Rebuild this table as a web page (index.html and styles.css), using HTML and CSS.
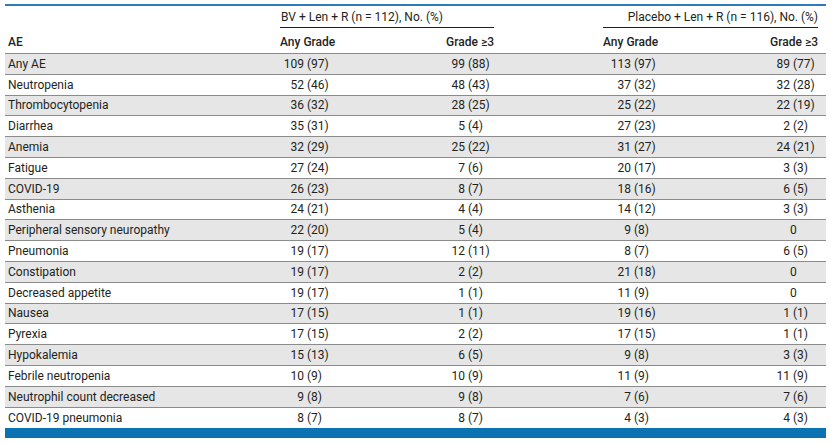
FILE: index.html
```html
<!DOCTYPE html>
<html lang="en">
<head>
<meta charset="utf-8">
<title>Adverse events</title>
<link rel="stylesheet" href="styles.css">
</head>
<body>
<table class="tbl">
  <colgroup>
    <col class="w-ae"><col class="w-c2"><col class="w-c3"><col class="w-gap"><col class="w-c4"><col class="w-c5">
  </colgroup>
  <thead>
    <tr class="h1">
      <th class="ae" rowspan="2">AE</th>
      <th colspan="2" class="grp grp-l"><div class="grp-in">BV + Len + R (n = 112), No. (%)</div></th>
      <th class="gap"></th>
      <th colspan="2" class="grp grp-r"><div class="grp-in">Placebo + Len + R (n = 116), No. (%)</div></th>
    </tr>
    <tr class="h2">
      <th class="sub sub-l">Any Grade</th>
      <th class="sub sub-r">Grade ≥3</th>
      <th class="gap"></th>
      <th class="sub sub-l">Any Grade</th>
      <th class="sub sub-r">Grade ≥3</th>
    </tr>
  </thead>
  <tbody>
    <tr><td class="name">Any AE</td><td class="c2"><span class="n">109</span><span class="p">(97)</span></td><td class="c3"><span class="n">99</span><span class="p">(88)</span></td><td></td><td class="c4"><span class="n">113</span><span class="p">(97)</span></td><td class="c5"><span class="n">89</span><span class="p">(77)</span></td></tr>
    <tr><td class="name">Neutropenia</td><td class="c2"><span class="n">52</span><span class="p">(46)</span></td><td class="c3"><span class="n">48</span><span class="p">(43)</span></td><td></td><td class="c4"><span class="n">37</span><span class="p">(32)</span></td><td class="c5"><span class="n">32</span><span class="p">(28)</span></td></tr>
    <tr><td class="name">Thrombocytopenia</td><td class="c2"><span class="n">36</span><span class="p">(32)</span></td><td class="c3"><span class="n">28</span><span class="p">(25)</span></td><td></td><td class="c4"><span class="n">25</span><span class="p">(22)</span></td><td class="c5"><span class="n">22</span><span class="p">(19)</span></td></tr>
    <tr><td class="name">Diarrhea</td><td class="c2"><span class="n">35</span><span class="p">(31)</span></td><td class="c3"><span class="n">5</span><span class="p">(4)</span></td><td></td><td class="c4"><span class="n">27</span><span class="p">(23)</span></td><td class="c5"><span class="n">2</span><span class="p">(2)</span></td></tr>
    <tr><td class="name">Anemia</td><td class="c2"><span class="n">32</span><span class="p">(29)</span></td><td class="c3"><span class="n">25</span><span class="p">(22)</span></td><td></td><td class="c4"><span class="n">31</span><span class="p">(27)</span></td><td class="c5"><span class="n">24</span><span class="p">(21)</span></td></tr>
    <tr><td class="name">Fatigue</td><td class="c2"><span class="n">27</span><span class="p">(24)</span></td><td class="c3"><span class="n">7</span><span class="p">(6)</span></td><td></td><td class="c4"><span class="n">20</span><span class="p">(17)</span></td><td class="c5"><span class="n">3</span><span class="p">(3)</span></td></tr>
    <tr><td class="name">COVID-19</td><td class="c2"><span class="n">26</span><span class="p">(23)</span></td><td class="c3"><span class="n">8</span><span class="p">(7)</span></td><td></td><td class="c4"><span class="n">18</span><span class="p">(16)</span></td><td class="c5"><span class="n">6</span><span class="p">(5)</span></td></tr>
    <tr><td class="name">Asthenia</td><td class="c2"><span class="n">24</span><span class="p">(21)</span></td><td class="c3"><span class="n">4</span><span class="p">(4)</span></td><td></td><td class="c4"><span class="n">14</span><span class="p">(12)</span></td><td class="c5"><span class="n">3</span><span class="p">(3)</span></td></tr>
    <tr><td class="name">Peripheral sensory neuropathy</td><td class="c2"><span class="n">22</span><span class="p">(20)</span></td><td class="c3"><span class="n">5</span><span class="p">(4)</span></td><td></td><td class="c4"><span class="n">9</span><span class="p">(8)</span></td><td class="c5"><span class="n"></span><span class="p z">0</span></td></tr>
    <tr><td class="name">Pneumonia</td><td class="c2"><span class="n">19</span><span class="p">(17)</span></td><td class="c3"><span class="n">12</span><span class="p">(11)</span></td><td></td><td class="c4"><span class="n">8</span><span class="p">(7)</span></td><td class="c5"><span class="n">6</span><span class="p">(5)</span></td></tr>
    <tr><td class="name">Constipation</td><td class="c2"><span class="n">19</span><span class="p">(17)</span></td><td class="c3"><span class="n">2</span><span class="p">(2)</span></td><td></td><td class="c4"><span class="n">21</span><span class="p">(18)</span></td><td class="c5"><span class="n"></span><span class="p z">0</span></td></tr>
    <tr><td class="name">Decreased appetite</td><td class="c2"><span class="n">19</span><span class="p">(17)</span></td><td class="c3"><span class="n">1</span><span class="p">(1)</span></td><td></td><td class="c4"><span class="n">11</span><span class="p">(9)</span></td><td class="c5"><span class="n"></span><span class="p z">0</span></td></tr>
    <tr><td class="name">Nausea</td><td class="c2"><span class="n">17</span><span class="p">(15)</span></td><td class="c3"><span class="n">1</span><span class="p">(1)</span></td><td></td><td class="c4"><span class="n">19</span><span class="p">(16)</span></td><td class="c5"><span class="n">1</span><span class="p">(1)</span></td></tr>
    <tr><td class="name">Pyrexia</td><td class="c2"><span class="n">17</span><span class="p">(15)</span></td><td class="c3"><span class="n">2</span><span class="p">(2)</span></td><td></td><td class="c4"><span class="n">17</span><span class="p">(15)</span></td><td class="c5"><span class="n">1</span><span class="p">(1)</span></td></tr>
    <tr><td class="name">Hypokalemia</td><td class="c2"><span class="n">15</span><span class="p">(13)</span></td><td class="c3"><span class="n">6</span><span class="p">(5)</span></td><td></td><td class="c4"><span class="n">9</span><span class="p">(8)</span></td><td class="c5"><span class="n">3</span><span class="p">(3)</span></td></tr>
    <tr><td class="name">Febrile neutropenia</td><td class="c2"><span class="n">10</span><span class="p">(9)</span></td><td class="c3"><span class="n">10</span><span class="p">(9)</span></td><td></td><td class="c4"><span class="n">11</span><span class="p">(9)</span></td><td class="c5"><span class="n">11</span><span class="p">(9)</span></td></tr>
    <tr><td class="name">Neutrophil count decreased</td><td class="c2"><span class="n">9</span><span class="p">(8)</span></td><td class="c3"><span class="n">9</span><span class="p">(8)</span></td><td></td><td class="c4"><span class="n">7</span><span class="p">(6)</span></td><td class="c5"><span class="n">7</span><span class="p">(6)</span></td></tr>
    <tr><td class="name">COVID-19 pneumonia</td><td class="c2"><span class="n">8</span><span class="p">(7)</span></td><td class="c3"><span class="n">8</span><span class="p">(7)</span></td><td></td><td class="c4"><span class="n">4</span><span class="p">(3)</span></td><td class="c5"><span class="n">4</span><span class="p">(3)</span></td></tr>
  </tbody>
</table>
</body>
</html>
```
FILE: styles.css
```css
html, body {
  background: #ffffff;
}
body {
  margin: 4px 0 0 5px;
  font-family: Roboto, "Liberation Sans", Arial, sans-serif;
  font-size: 12px;
  color: #231f20;
}
.tbl {
  width: 821px;
  table-layout: fixed;
  border-collapse: separate;
  border-spacing: 0;
  border-top: 2px solid #2a7cbd;
  border-bottom: 10px solid #0b73b2;
}
.w-ae { width: 267px; }
.w-c2 { width: 116px; }
.w-c3 { width: 114px; }
.w-gap { width: 93px; }
.w-c4 { width: 116px; }
.w-c5 { width: 115px; }

th, td {
  padding: 0;
  white-space: nowrap;
}
.h1 { height: 22px; }
.h2 { height: 26px; }
.h2 th, .ae {
  border-bottom: 1px solid #8b8b8b;
}
.ae {
  text-align: left;
  vertical-align: bottom;
  font-weight: 500;
  padding: 0 0 4px 3px;
}
.grp {
  font-weight: 400;
  vertical-align: bottom;
  padding: 0 8px;
}
.grp-in {
  border-bottom: 1px solid #231f20;
  padding-bottom: 3px;
  line-height: 14px;
}
.grp-l .grp-in { text-align: left; padding-left: 1px; }
.grp-r .grp-in { text-align: right; }
.sub {
  font-weight: 500;
  vertical-align: bottom;
  padding: 0 8px 4px;
}
.sub-l { text-align: left; }
.sub-r { text-align: right; }

tbody tr { height: 20.8px; }
tbody tr:nth-child(odd) td { background: #e6e6e7; }
tbody td {
  border-bottom: 1px solid #8b8b8b;
  vertical-align: middle;
}
tbody tr:last-child td { border-bottom: 0; }
.name { padding-left: 3px; }

.n {
  display: inline-block;
  width: 24px;
  text-align: right;
  margin-right: 3px;
}
.p {
  display: inline-block;
  text-align: left;
}
.z { margin-left: -3px; }
.c2 { padding-left: 8px; }
.c3 { padding-left: 53px; }
.c4 { padding-left: 12px; }
.c5 { padding-left: 55px; }
```
